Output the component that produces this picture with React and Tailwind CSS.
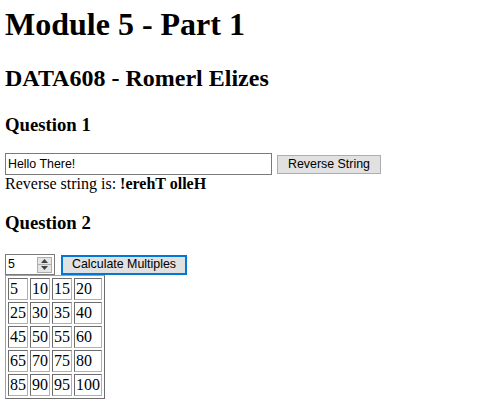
import { useState } from 'react';

const rows = [
  [5, 10, 15, 20],
  [25, 30, 35, 40],
  [45, 50, 55, 60],
  [65, 70, 75, 80],
  [85, 90, 95, 100],
];

function Spinner() {
  return (
    <div className="flex h-[16px] w-[15px] flex-col">
      <div className="flex h-[8px] items-center justify-center border border-[#adadad] bg-[#e5e5e5]">
        <svg width="7" height="4" viewBox="0 0 7 4">
          <path d="M0 4 L3.5 0 L7 4 Z" fill="#404040" />
        </svg>
      </div>
      <div className="flex h-[8px] items-center justify-center border border-t-0 border-[#adadad] bg-[#e5e5e5]">
        <svg width="7" height="4" viewBox="0 0 7 4">
          <path d="M0 0 L3.5 4 L7 0 Z" fill="#404040" />
        </svg>
      </div>
    </div>
  );
}

export default function App() {
  const [text] = useState('Hello There!');

  return (
    <div className="min-h-screen bg-white pl-[5px] font-['Liberation_Serif',serif] text-black">
      <h1 className="pt-[6px] text-[32px] font-bold leading-[37px]">Module 5 - Part 1</h1>
      <h2 className="mt-[21px] text-[24px] font-bold leading-[28px]">DATA608 - Romerl Elizes</h2>
      <h3 className="mt-[22px] text-[18.72px] font-bold leading-[22px]">Question 1</h3>

      <div className="mt-[17px] flex h-[22px] items-center font-['Liberation_Sans',sans-serif] text-[12.4px]">
        <div className="flex h-[22px] w-[267px] items-center border border-[#7a7a7a] pl-[2px]">{text}</div>
        <button className="ml-[5px] h-[19px] w-[104px] border border-[#adadad] bg-[#e1e1e1] leading-none">
          Reverse String
        </button>
      </div>
      <p className="text-[16px] leading-[18px]">
        Reverse string is: <b>{text.split('').reverse().join('')}</b>
      </p>

      <h3 className="mt-[19px] text-[18.72px] font-bold leading-[22px]">Question 2</h3>

      <div className="mt-[20px] flex h-[21px] items-center font-['Liberation_Sans',sans-serif] text-[12.4px]">
        <div className="flex h-[21px] w-[50px] items-center justify-between border border-[#7a7a7a] pl-[2px] pr-[2px]">
          <span>5</span>
          <Spinner />
        </div>
        <button className="ml-[6px] h-[20px] w-[126px] border-2 border-[#0078d7] bg-[#e1e1e1] leading-none">
          Calculate Multiples
        </button>
      </div>

      <table className="border-separate border-spacing-[2px] border border-t-[#a0a0a0] border-l-[#a0a0a0] border-b-[#6d6d6d] border-r-[#6d6d6d] text-[16px] leading-[18px]">
        <tbody>
          {rows.map((r, i) => (
            <tr key={i}>
              {r.map((n) => (
                <td
                  key={n}
                  className="border border-t-[#6d6d6d] border-l-[#6d6d6d] border-b-[#b0b0b0] border-r-[#b0b0b0] p-[1px] text-left"
                >
                  {n}
                </td>
              ))}
            </tr>
          ))}
        </tbody>
      </table>
    </div>
  );
}
